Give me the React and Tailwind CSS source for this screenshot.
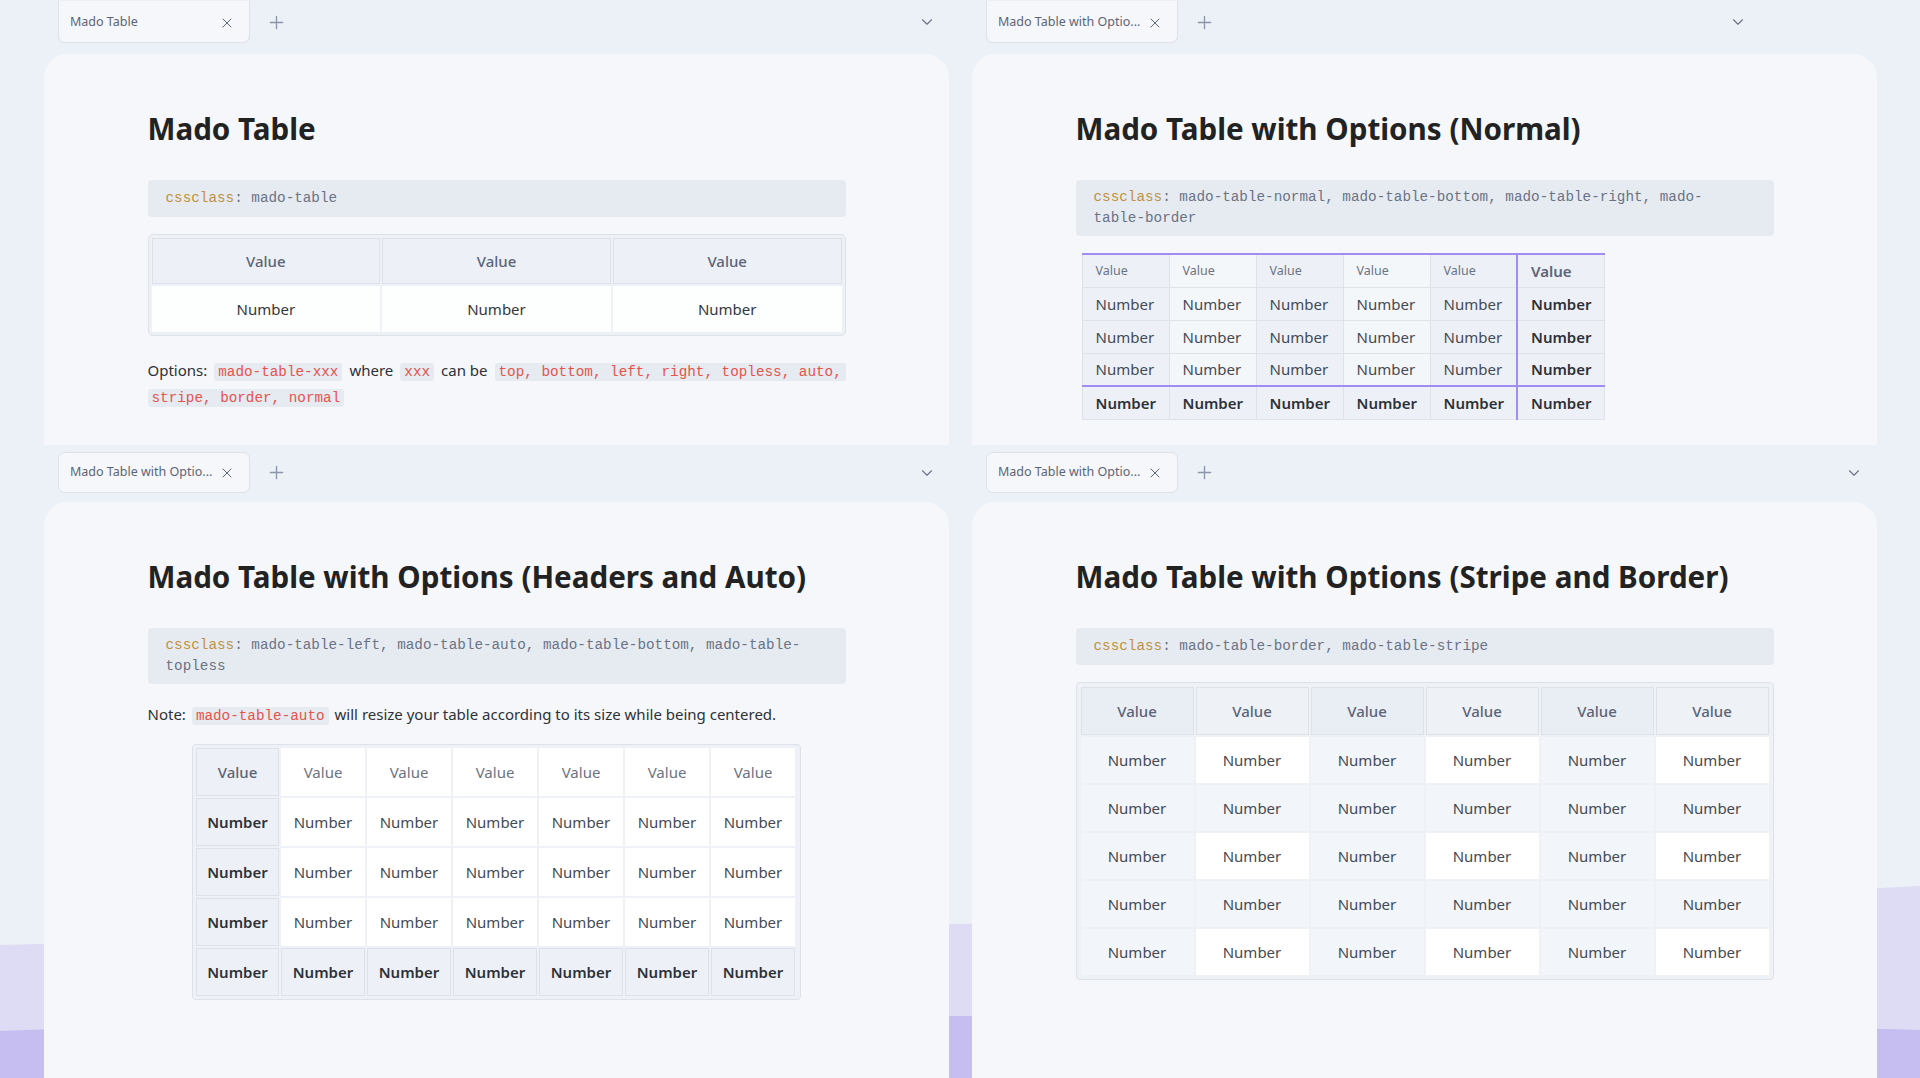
import { X, Plus, ChevronDown } from 'lucide-react';

const sans = "font-['Noto_Sans',sans-serif]";
const mono = "font-['Liberation_Mono',monospace]";

const Tab = ({ title, top }) => (
  <div
    className={`flex items-center justify-between w-[192px] pl-[11px] pr-[14px] bg-[#f5f7fa] border border-[#dde1e8] ${
      top ? 'h-[42px] pt-[2px] border-t-0 rounded-b-[7px]' : 'h-[41px] rounded-[7px]'
    }`}
  >
    <span className="text-[12.5px] text-[#5c6478] whitespace-nowrap">{title}</span>
    <X size={16} strokeWidth={1.5} className="text-[#5f677a] shrink-0" />
  </div>
);

const TabBar = ({ title, top, chevronGap }) => (
  <div className={top ? 'h-[54px]' : 'h-[57px] pt-[7px]'}>
    <div className={`flex items-center pl-[14px] ${top ? 'h-[42px] pt-[2px]' : 'h-[41px]'}`}>
      <Tab title={title} top={top} />
      <Plus size={21} strokeWidth={1.5} className="ml-[16px] text-[#8c95a8]" />
      <div className="flex-1" />
      <ChevronDown size={18} strokeWidth={1.5} className={`text-[#6b7385] ${chevronGap}`} />
    </div>
  </div>
);

const Heading = ({ children }) => (
  <h1 className="text-[29.6px] leading-[40px] font-bold text-[#222222]">{children}</h1>
);

const CodeBlock = ({ lines }) => (
  <div
    className={`bg-[#e6ebf2] rounded-[4px] px-[18px] ${lines.length > 1 ? 'py-[7px]' : 'py-[8px]'} ${mono} text-[14.3px] leading-[21px] text-[#6b7385]`}
  >
    {lines.map((l, i) => (
      <div key={i}>
        {i === 0 && <span className="text-[#c0913f]">cssclass</span>}
        {i === 0 ? ': ' : ''}
        {l}
      </div>
    ))}
  </div>
);

const Code = ({ children, gap = 'mx-[7px]' }) => (
  <code className={`${mono} text-[14.3px] text-[#e5534b] bg-[#e6ebf2] rounded-[3px] px-[4px] py-[1px] ${gap}`}>{children}</code>
);

const BasicTable = () => (
  <div className="mt-[17px] border border-[#dde2e8] rounded-[5px] p-[3px] bg-[#eef2f7]">
    <div className="grid grid-cols-3 gap-x-[2px]">
      {[0, 1, 2].map(i => (
        <div key={'h' + i} className="h-[46px] flex items-center justify-center bg-[#edf1f7] border border-[#dde1e8] text-[15px] font-medium text-[#5c6478]">
          Value
        </div>
      ))}
      {[0, 1, 2].map(i => (
        <div key={'b' + i} className="h-[46px] mt-[2px] flex items-center justify-center bg-[#fdfefe] text-[15px] text-[#333840]">
          Number
        </div>
      ))}
    </div>
  </div>
);

const NormalTable = () => {
  const rows = [0, 1, 2, 3, 4];
  const cols = [0, 1, 2, 3, 4, 5];
  return (
    <table className="mt-[17px] ml-[6px] border-collapse table-fixed w-[523px]">
      <tbody>
        {rows.map(r => (
          <tr key={r}>
            {cols.map(c => {
              const last = c === 5;
              const lastRow = r === 4;
              const dark = c % 2 === 0 || last || lastRow;
              return (
                <td
                  key={c}
                  className={`h-[33px] px-[13px] py-0 leading-[20px] whitespace-nowrap text-left border border-[#dfe3e8] ${dark ? 'bg-[#edf1f7]' : 'bg-[#f4f7fa]'} ${
                    last ? 'border-l-2 border-l-[#a18cf1]' : ''
                  } ${lastRow ? 'border-t-2 border-t-[#a18cf1]' : ''} ${r === 0 ? 'border-t-2 border-t-[#a18cf1]' : ''} ${
                    r === 0
                      ? last
                        ? 'text-[15px] font-semibold text-[#5c6478]'
                        : 'text-[12.5px] text-[#6b7385]'
                      : last || lastRow
                        ? 'text-[15px] font-semibold text-[#2e3138]'
                        : 'text-[15px] text-[#444a55]'
                  }`}
                >
                  {r === 0 ? 'Value' : 'Number'}
                </td>
              );
            })}
          </tr>
        ))}
      </tbody>
    </table>
  );
};

const AutoTable = () => {
  const rows = [0, 1, 2, 3, 4];
  const cols = [0, 1, 2, 3, 4, 5, 6];
  return (
    <div className="mt-[16px] mx-auto w-[609px] border border-[#dde2e8] rounded-[4px] p-[3px] bg-[#eef2f8]">
      <div className="grid grid-cols-[83px_repeat(6,84px)] gap-[2px]">
        {rows.map(r =>
          cols.map(c => {
            const boxed = c === 0 || r === 4;
            return (
              <div
                key={r + '-' + c}
                className={`h-[48px] flex items-center justify-center text-[15px] ${
                  boxed ? 'bg-[#edf1f7] border border-[#dde1e8]' : 'bg-white'
                } ${
                  r === 0
                    ? c === 0
                      ? 'font-medium text-[#5c6478]'
                      : 'text-[#6b7385]'
                    : boxed
                      ? 'font-semibold text-[#2e3138]'
                      : 'text-[#444a55]'
                }`}
              >
                {r === 0 ? 'Value' : 'Number'}
              </div>
            );
          })
        )}
      </div>
    </div>
  );
};

const StripeTable = () => {
  const rows = [0, 1, 2, 3, 4, 5];
  const cols = [0, 1, 2, 3, 4, 5];
  return (
    <div className="mt-[17px] border border-[#dde2e8] rounded-[4px] p-[4px] bg-[#eef2f7]">
      <div className="grid grid-cols-6 gap-[2px]">
        {rows.map(r =>
          cols.map(c => {
            if (r === 0) {
              return (
                <div
                  key={r + '-' + c}
                  className={`h-[48px] flex items-center justify-center border border-[#dde1e8] text-[15px] font-medium text-[#5c6478] ${
                    c % 2 === 0 ? 'bg-[#e9eef5]' : 'bg-[#eef2f7]'
                  }`}
                >
                  Value
                </div>
              );
            }
            const white = r % 2 === 1 && c % 2 === 1;
            return (
              <div
                key={r + '-' + c}
                className={`h-[46px] flex items-center justify-center text-[15px] text-[#444a55] ${white ? 'bg-white' : 'bg-[#f2f5f9]'}`}
              >
                Number
              </div>
            );
          })
        )}
      </div>
    </div>
  );
};

const Card = ({ top, children }) => (
  <div className={`bg-[#f5f7fa] rounded-t-[24px] ${top ? 'h-[391px]' : 'h-[576px]'}`}>
    <div className="w-[698px] mx-auto pt-[55px]">{children}</div>
  </div>
);

const App = () => {
  return (
    <div className={`relative w-[1920px] h-[1078px] overflow-hidden bg-[#ecf0f7] ${sans}`}>
      <svg className="absolute inset-0" width="1920" height="1078" viewBox="0 0 1920 1078">
        <path d="M0 945 C 300 938 650 930 960 924 C 1300 916 1650 900 1920 886 L1920 1078 L0 1078 Z" fill="#dedbf4" />
        <path d="M0 1031 C 200 1024 500 1016 960 1016 C 1400 1016 1700 1024 1920 1030 L1920 1078 L0 1078 Z" fill="#c6bdf0" />
      </svg>
      <div className="relative flex pl-[44px] gap-[23px]">
        <div className="w-[905px] flex flex-col">
          <TabBar title="Mado Table" top chevronGap="mr-[13px]" />
          <Card top>
            <Heading>Mado Table</Heading>
            <div className="mt-[31px]">
              <CodeBlock lines={['mado-table']} />
            </div>
            <BasicTable />
            <div className="mt-[22px] text-[15px] leading-[24px] text-[#2e3138]">
              <div className="whitespace-nowrap">
                Options:<Code>mado-table-xxx</Code>where<Code>xxx</Code>can be<Code gap="ml-[7px]">top, bottom, left, right, topless, auto,</Code>
              </div>
              <div>
                <Code gap="ml-0">stripe, border, normal</Code>
              </div>
            </div>
          </Card>
          <TabBar title="Mado Table with Optio..." chevronGap="mr-[13px]" />
          <Card>
            <Heading>Mado Table with Options (Headers and Auto)</Heading>
            <div className="mt-[31px]">
              <CodeBlock lines={['mado-table-left, mado-table-auto, mado-table-bottom, mado-table-', 'topless']} />
            </div>
            <p className="mt-[18px] text-[15px] leading-[24px] text-[#2e3138] whitespace-nowrap">
              Note:<Code gap="mx-[6px]">mado-table-auto</Code>will resize your table according to its size while being centered.
            </p>
            <AutoTable />
          </Card>
        </div>
        <div className="w-[905px] flex flex-col">
          <TabBar title="Mado Table with Optio..." top chevronGap="mr-[130px]" />
          <Card top>
            <Heading>Mado Table with Options (Normal)</Heading>
            <div className="mt-[31px]">
              <CodeBlock lines={['mado-table-normal, mado-table-bottom, mado-table-right, mado-', 'table-border']} />
            </div>
            <NormalTable />
          </Card>
          <TabBar title="Mado Table with Optio..." chevronGap="mr-[14px]" />
          <Card>
            <Heading>Mado Table with Options (Stripe and Border)</Heading>
            <div className="mt-[31px]">
              <CodeBlock lines={['mado-table-border, mado-table-stripe']} />
            </div>
            <StripeTable />
          </Card>
        </div>
      </div>
    </div>
  );
};

export default App;
